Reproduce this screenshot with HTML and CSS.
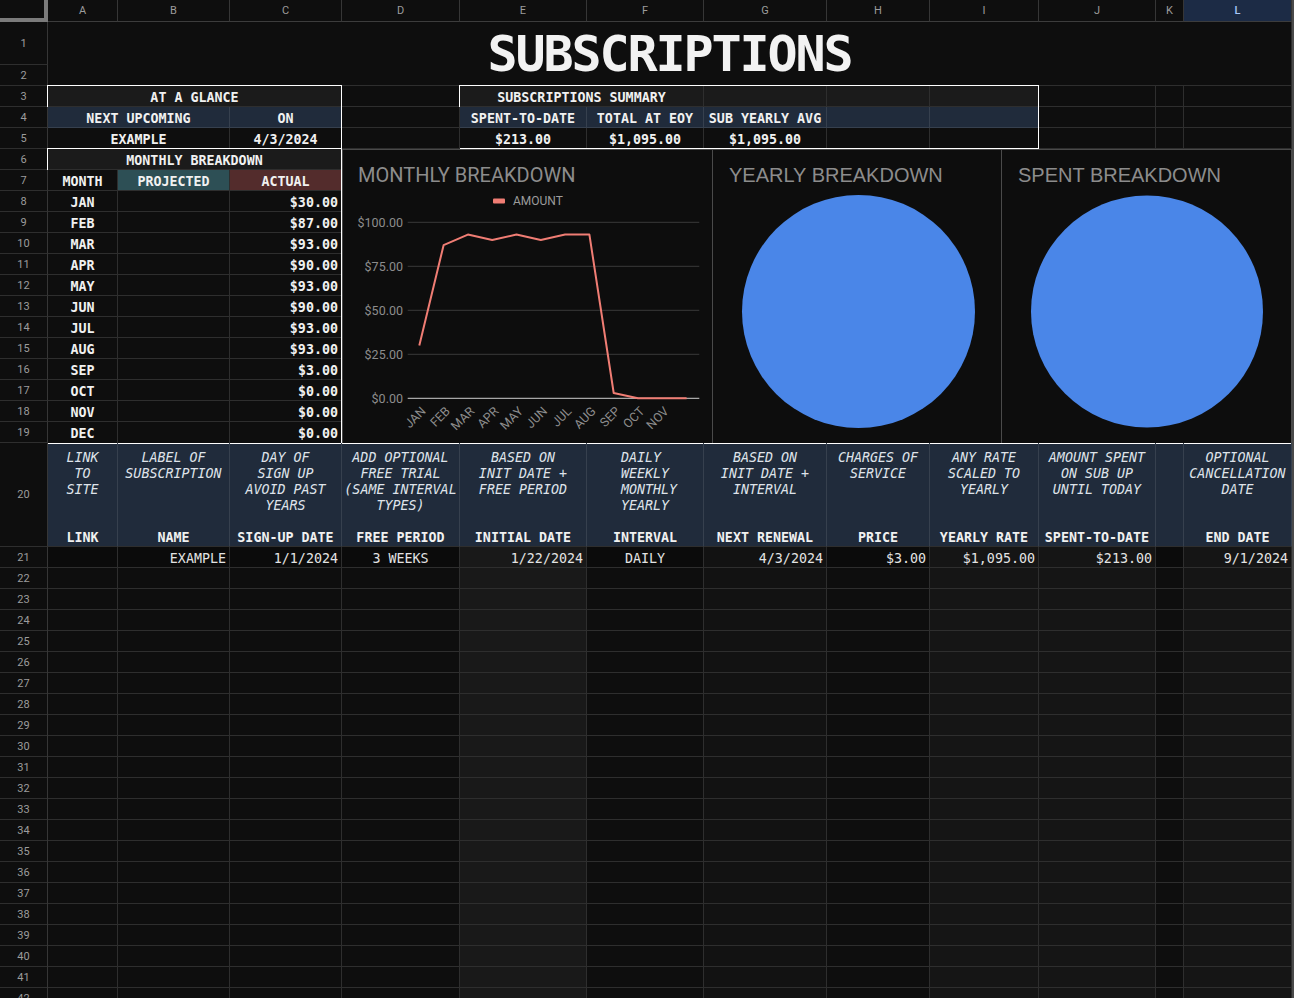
FILE: index.html
```html
<!DOCTYPE html>
<html lang="en">
<head>
<meta charset="utf-8"/>
<title>Subscriptions</title>
<link rel="stylesheet" href="styles.css">
</head>
<body>
<div class="sheet">
  <!-- column letters -->
  <div class="corner"></div>
  <div class="ch">A</div>
  <div class="ch">B</div>
  <div class="ch">C</div>
  <div class="ch">D</div>
  <div class="ch">E</div>
  <div class="ch">F</div>
  <div class="ch">G</div>
  <div class="ch">H</div>
  <div class="ch">I</div>
  <div class="ch">J</div>
  <div class="ch">K</div>
  <div class="ch sel">L</div>

  <!-- rows 1-2 -->
  <div class="rh">1</div>
  <div class="title">SUBSCRIPTIONS</div>
  <div class="rh">2</div>

  <!-- rows 3-5 -->
  <div class="rh">3</div>
  <div class="box glance">
    <div class="c ctr b grey span3 nr">AT A GLANCE</div>
    <div class="c ctr b navy span2">NEXT UPCOMING</div>
    <div class="c ctr b navy nr">ON</div>
    <div class="c ctr b span2 nb">EXAMPLE</div>
    <div class="c ctr b nr nb">4/3/2024</div>
  </div>
  <div class="c"></div>
  <div class="box summary">
    <div class="c ctr b grey span2">SUBSCRIPTIONS SUMMARY</div>
    <div class="c grey"></div>
    <div class="c grey"></div>
    <div class="c grey nr"></div>
    <div class="c ctr b navy">SPENT-TO-DATE</div>
    <div class="c ctr b navy">TOTAL AT EOY</div>
    <div class="c ctr b navy">SUB YEARLY AVG</div>
    <div class="c navy"></div>
    <div class="c navy nr"></div>
    <div class="c ctr b nb">$213.00</div>
    <div class="c ctr b nb">$1,095.00</div>
    <div class="c ctr b nb">$1,095.00</div>
    <div class="c nb"></div>
    <div class="c nr nb"></div>
  </div>
  <div class="c"></div>
  <div class="c"></div>
  <div class="c"></div>
  <div class="rh">4</div>
  <div class="c"></div>
  <div class="c"></div>
  <div class="c"></div>
  <div class="c"></div>
  <div class="rh">5</div>
  <div class="c"></div>
  <div class="c"></div>
  <div class="c"></div>
  <div class="c"></div>

  <!-- rows 6-19 -->
  <div class="rh">6</div>
  <div class="box monthly">
    <div class="c ctr b grey span3 nr">MONTHLY BREAKDOWN</div>
    <div class="c ctr b">MONTH</div>
    <div class="c ctr b teal">PROJECTED</div>
    <div class="c ctr b red nr">ACTUAL</div>
    <div class="c ctr b">JAN</div><div class="c"></div><div class="c rt b nr">$30.00</div>
    <div class="c ctr b">FEB</div><div class="c"></div><div class="c rt b nr">$87.00</div>
    <div class="c ctr b">MAR</div><div class="c"></div><div class="c rt b nr">$93.00</div>
    <div class="c ctr b">APR</div><div class="c"></div><div class="c rt b nr">$90.00</div>
    <div class="c ctr b">MAY</div><div class="c"></div><div class="c rt b nr">$93.00</div>
    <div class="c ctr b">JUN</div><div class="c"></div><div class="c rt b nr">$90.00</div>
    <div class="c ctr b">JUL</div><div class="c"></div><div class="c rt b nr">$93.00</div>
    <div class="c ctr b">AUG</div><div class="c"></div><div class="c rt b nr">$93.00</div>
    <div class="c ctr b">SEP</div><div class="c"></div><div class="c rt b nr">$3.00</div>
    <div class="c ctr b">OCT</div><div class="c"></div><div class="c rt b nr">$0.00</div>
    <div class="c ctr b">NOV</div><div class="c"></div><div class="c rt b nr">$0.00</div>
    <div class="c ctr b nb">DEC</div><div class="c nb"></div><div class="c rt b nr nb">$0.00</div>
  </div>
  <div class="charts">
    <div class="panel first">
      <svg viewBox="0 0 369 293" width="369" height="293">
        <g transform="translate(-1,1)">
          <text class="ttl" x="16" y="31">MONTHLY BREAKDOWN</text>
          <rect x="151" y="47.5" width="12" height="5" rx="1" fill="#f07d74"/>
          <text class="lg" x="171" y="54">AMOUNT</text>
          <g class="gl">
            <line x1="65.7" x2="357.3" y1="71.3" y2="71.3"/>
            <line x1="65.7" x2="357.3" y1="115.3" y2="115.3"/>
            <line x1="65.7" x2="357.3" y1="159.3" y2="159.3"/>
            <line x1="65.7" x2="357.3" y1="203.3" y2="203.3"/>
          </g>
          <line class="zero" x1="65.7" x2="357.3" y1="247.3" y2="247.3"/>
          <g class="ax">
            <text x="61" y="75.5">$100.00</text>
            <text x="61" y="119.5">$75.00</text>
            <text x="61" y="163.5">$50.00</text>
            <text x="61" y="207.5">$25.00</text>
            <text x="61" y="251.5">$0.00</text>
          </g>
          <polyline class="line" points="77.3,194.5 101.6,94.2 125.9,83.6 150.2,88.9 174.5,83.6 198.8,88.9 223.1,83.6 247.4,83.6 271.7,242 296,247.3 320.3,247.3 344.6,247.3"/>
          <g class="xl">
            <text transform="translate(84.5,261) rotate(-45)">JAN</text>
            <text transform="translate(108.8,261) rotate(-45)">FEB</text>
            <text transform="translate(133.1,261) rotate(-45)">MAR</text>
            <text transform="translate(157.4,261) rotate(-45)">APR</text>
            <text transform="translate(181.7,261) rotate(-45)">MAY</text>
            <text transform="translate(206,261) rotate(-45)">JUN</text>
            <text transform="translate(230.3,261) rotate(-45)">JUL</text>
            <text transform="translate(254.6,261) rotate(-45)">AUG</text>
            <text transform="translate(278.9,261) rotate(-45)">SEP</text>
            <text transform="translate(303.2,261) rotate(-45)">OCT</text>
            <text transform="translate(327.5,261) rotate(-45)">NOV</text>
          </g>
        </g>
      </svg>
    </div>
    <div class="panel pie">
      <svg viewBox="0 0 288 293" width="288" height="293">
        <g transform="translate(0,1)">
          <text class="ttl wide" x="16" y="31">YEARLY BREAKDOWN</text>
          <circle cx="145.5" cy="160.5" r="116.5" fill="#4a86e8"/>
        </g>
      </svg>
    </div>
    <div class="panel pie">
      <svg viewBox="0 0 289 293" width="289" height="293">
        <g transform="translate(0,1)">
          <text class="ttl wide" x="16" y="31">SPENT BREAKDOWN</text>
          <circle cx="145" cy="160.5" r="116" fill="#4a86e8"/>
        </g>
      </svg>
    </div>
  </div>
  <div class="rh">7</div>
  <div class="rh">8</div>
  <div class="rh">9</div>
  <div class="rh">10</div>
  <div class="rh">11</div>
  <div class="rh">12</div>
  <div class="rh">13</div>
  <div class="rh">14</div>
  <div class="rh">15</div>
  <div class="rh">16</div>
  <div class="rh">17</div>
  <div class="rh">18</div>
  <div class="rh">19</div>

  <!-- row 20: column headers of the list -->
  <div class="rh">20</div>
  <div class="hd"><span class="d">LINK<br>TO<br>SITE</span><span class="l">LINK</span></div>
  <div class="hd"><span class="d">LABEL OF<br>SUBSCRIPTION</span><span class="l">NAME</span></div>
  <div class="hd"><span class="d">DAY OF<br>SIGN UP<br>AVOID PAST<br>YEARS</span><span class="l">SIGN-UP DATE</span></div>
  <div class="hd"><span class="d">ADD OPTIONAL<br>FREE TRIAL<br>(SAME INTERVAL<br>TYPES)</span><span class="l">FREE PERIOD</span></div>
  <div class="hd"><span class="d">BASED ON<br>INIT DATE +<br>FREE PERIOD</span><span class="l">INITIAL DATE</span></div>
  <div class="hd"><span class="d left">DAILY<br>WEEKLY<br>MONTHLY<br>YEARLY</span><span class="l">INTERVAL</span></div>
  <div class="hd"><span class="d">BASED ON<br>INIT DATE +<br>INTERVAL</span><span class="l">NEXT RENEWAL</span></div>
  <div class="hd"><span class="d">CHARGES OF<br>SERVICE</span><span class="l">PRICE</span></div>
  <div class="hd"><span class="d">ANY RATE<br>SCALED TO<br>YEARLY</span><span class="l">YEARLY RATE</span></div>
  <div class="hd"><span class="d">AMOUNT SPENT<br>ON SUB UP<br>UNTIL TODAY</span><span class="l">SPENT-TO-DATE</span></div>
  <div class="hd"></div>
  <div class="hd"><span class="d">OPTIONAL<br>CANCELLATION<br>DATE</span><span class="l">END DATE</span></div>

  <!-- row 21 -->
  <div class="rh">21</div>
  <div class="c val"></div>
  <div class="c val rt">EXAMPLE</div>
  <div class="c val rt">1/1/2024</div>
  <div class="c val ctr">3 WEEKS</div>
  <div class="c val rt t1">1/22/2024</div>
  <div class="c val ctr">DAILY</div>
  <div class="c val rt t2">4/3/2024</div>
  <div class="c val rt">$3.00</div>
  <div class="c val rt t3">$1,095.00</div>
  <div class="c val rt t3">$213.00</div>
  <div class="c val"></div>
  <div class="c val rt t3">9/1/2024</div>

  <!-- rows 22-42 -->
  <div class="strip nums">
    <div>22</div><div>23</div><div>24</div><div>25</div><div>26</div><div>27</div><div>28</div>
    <div>29</div><div>30</div><div>31</div><div>32</div><div>33</div><div>34</div><div>35</div>
    <div>36</div><div>37</div><div>38</div><div>39</div><div>40</div><div>41</div><div>42</div>
  </div>
  <div class="strip"></div>
  <div class="strip"></div>
  <div class="strip"></div>
  <div class="strip"></div>
  <div class="strip t1"></div>
  <div class="strip"></div>
  <div class="strip t2"></div>
  <div class="strip"></div>
  <div class="strip t3"></div>
  <div class="strip t3"></div>
  <div class="strip"></div>
  <div class="strip t3"></div>
</div>
</body>
</html>
```

FILE: styles.css
```css
* {
  box-sizing: border-box;
}
body {
  margin: 0;
  background: #0e0e0e;
  color: #f1f1f1;
  font-family: "DejaVu Sans Mono", monospace;
  font-size: 13.33px;
  overflow: hidden;
}
.sheet {
  display: grid;
  grid-template-columns: 48px 70px 112px 112px 118px 127px 117px 123px 103px 109px 117px 28px 108px;
  grid-template-rows: 22px 43px repeat(18, 21px) 104px repeat(22, 21px);
  width: 1294px;
  height: 998px;
  overflow: hidden;
  border-right: 2px solid #4a4a4a;
}

/* headers */
.corner {
  border-right: 4px solid #7b7b7b;
  border-bottom: 4px solid #7b7b7b;
}
.ch, .rh, .nums div {
  display: flex;
  align-items: center;
  justify-content: center;
  font-family: Roboto, sans-serif;
  font-size: 11px;
  color: #9c9c9c;
}
.ch {
  border-right: 1px solid #363636;
  border-bottom: 1px solid #3c3c3c;
}
.ch.sel {
  background: #1c2b45;
  color: #a8c7fa;
  font-weight: 500;
}
.rh {
  border-right: 1px solid #363636;
  border-bottom: 1px solid #2e2e2e;
}

/* cells */
.c {
  display: flex;
  align-items: center;
  padding: 2px 3px 0;
  white-space: nowrap;
  overflow: hidden;
  border-right: 1px solid #2e2e2e;
  border-bottom: 1px solid #2e2e2e;
}
.ctr { justify-content: center; }
.rt { justify-content: flex-end; }
.b { font-weight: bold; }
.nr { border-right: none; }
.nb { border-bottom: none; }
.span2 { grid-column: span 2; }
.span3 { grid-column: span 3; }
.grey { background: #1b1b1b; }
.navy { background: #202b3b; border-color: #36404e; }
.teal { background: #2d4f55; }
.red { background: #532c2c; }
.val {
  color: #e3e3e3;
  background: #0b0b0b;
}
.t1 { background-color: #191919; }
.t2 { background-color: #121212; }
.t3 { background-color: #151515; }

.title {
  grid-column: span 12;
  grid-row: span 2;
  display: flex;
  align-items: center;
  justify-content: center;
  font-size: 50px;
  font-weight: bold;
  letter-spacing: -2.1px;
  color: #f2f2f2;
  border-right: 1px solid #2e2e2e;
  border-bottom: 1px solid #2e2e2e;
}

/* bordered blocks */
.box {
  display: grid;
  border: 1px solid #ffffff;
  margin: -1px 0 0 -1px;
}
.glance {
  grid-column: span 3;
  grid-row: span 3;
  grid-template-columns: 70px 112px 1fr;
  grid-template-rows: 21px 21px 1fr;
}
.summary {
  grid-column: span 5;
  grid-row: span 3;
  grid-template-columns: 127px 117px 123px 103px 1fr;
  grid-template-rows: 21px 21px 1fr;
}
.monthly {
  grid-column: span 3;
  grid-row: span 14;
  grid-template-columns: 70px 112px 1fr;
  grid-template-rows: repeat(13, 21px) 1fr;
  border-bottom: none;
}

/* charts */
.charts {
  grid-column: span 9;
  grid-row: span 14;
  display: flex;
}
.panel {
  background: #0d0d0d;
  border-top: 1px solid #4a4a4a;
  border-right: 1px solid #4a4a4a;
}
.panel.first {
  flex: 0 0 371px;
  border-left: 1px solid #4a4a4a;
}
.panel.pie {
  flex: 0 0 289px;
}
.panel.pie:last-child {
  flex: 1;
}
.panel svg {
  display: block;
}
.ttl {
  font-family: Roboto, sans-serif;
  font-size: 20px;
  fill: #8c8c8c;
}
.ttl.wide {
  font-family: "Liberation Sans", Arial, sans-serif;
  font-size: 20px;
}
.lg {
  font-family: Roboto, sans-serif;
  font-size: 12px;
  fill: #9c9c9c;
}
.gl line {
  stroke: #3a3a3a;
  stroke-width: 1;
}
.zero {
  stroke: #cfcfcf;
  stroke-width: 1;
}
.ax text {
  font-family: Roboto, sans-serif;
  font-size: 12.5px;
  fill: #8c8c8c;
  text-anchor: end;
}
.xl text {
  font-family: Roboto, sans-serif;
  font-size: 12.5px;
  fill: #8c8c8c;
  text-anchor: end;
}
.line {
  fill: none;
  stroke: #f07d74;
  stroke-width: 2;
  stroke-linejoin: round;
}

/* row 20 */
.hd {
  display: flex;
  flex-direction: column;
  justify-content: space-between;
  align-items: center;
  padding: 7px 2px 0;
  line-height: 16px;
  text-align: center;
  white-space: nowrap;
  background: #202b3b;
  border-right: 1px solid #36404e;
  border-bottom: 1px solid #2e2e2e;
  box-shadow: inset 0 1px 0 #ffffff;
}
.hd .d {
  font-style: italic;
  color: #dfe3ea;
}
.hd .d.left {
  text-align: left;
  padding-left: 1ch;
}
.hd .l {
  font-weight: bold;
  margin-top: auto;
}

/* empty rows */
.strip {
  grid-row: span 21;
  border-right: 1px solid #2e2e2e;
  background-image: repeating-linear-gradient(to bottom, transparent 0 20px, #2e2e2e 20px 21px);
}
.nums {
  display: flex;
  flex-direction: column;
  background-image: none;
  border-right-color: #363636;
}
.nums div {
  flex: 0 0 21px;
  border-bottom: 1px solid #2e2e2e;
}
```
